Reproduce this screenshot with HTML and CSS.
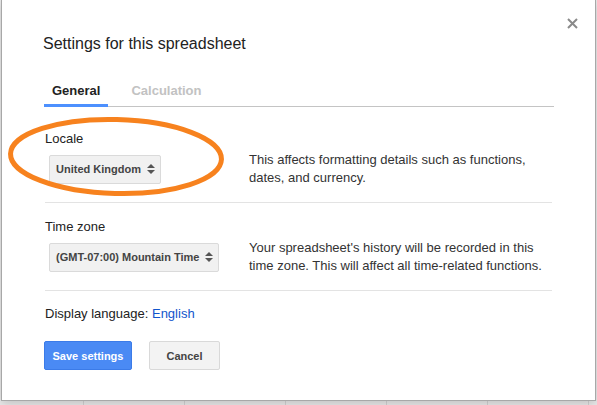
FILE: index.html
```html
<!DOCTYPE html>
<html lang="en">
<head>
<meta charset="utf-8">
<title>Settings for this spreadsheet</title>
<link rel="stylesheet" href="styles.css">
</head>
<body>
<div class="dialog">
  <button class="close" aria-label="Close">
    <svg width="11" height="11" viewBox="0 0 11 11"><path d="M1 1L10 10M10 1L1 10" stroke="#8a8a8a" stroke-width="2" fill="none"/></svg>
  </button>
  <h1 class="title">Settings for this spreadsheet</h1>
  <div class="tabs">
    <div class="tab tab-active">General</div>
    <div class="tab tab-disabled">Calculation</div>
  </div>
  <div class="section">
    <div class="label">Locale</div>
    <div class="row">
      <div class="field">
        <div class="select"><span>United Kingdom</span><span class="arrows"><i class="up"></i><i class="down"></i></span></div>
      </div>
      <p class="desc">This affects formatting details such as functions,<br>dates, and currency.</p>
    </div>
  </div>
  <div class="section">
    <div class="label">Time zone</div>
    <div class="row">
      <div class="field">
        <div class="select"><span>(GMT-07:00) Mountain Time</span><span class="arrows"><i class="up"></i><i class="down"></i></span></div>
      </div>
      <p class="desc">Your spreadsheet's history will be recorded in this<br>time zone. This will affect all time-related functions.</p>
    </div>
  </div>
  <div class="lang">Display language: <a class="link" href="#">English</a></div>
  <div class="buttons">
    <button class="btn btn-primary">Save settings</button>
    <button class="btn btn-default">Cancel</button>
  </div>
  <svg class="highlight" width="240" height="210" viewBox="0 0 240 210">
    <ellipse cx="114" cy="156.5" rx="105.5" ry="37" transform="rotate(1.5 114 156.5)" fill="none" stroke="#f7821e" stroke-width="5"/>
  </svg>
</div>
</body>
</html>
```
FILE: styles.css
```css
html, body {
  margin: 0;
  padding: 0;
}
body {
  width: 597px;
  height: 405px;
  overflow: hidden;
  background-color: #ebebeb;
  background-image: repeating-linear-gradient(90deg, transparent 0 83px, #d3d3d3 83px 84px, transparent 84px 101px);
  font-family: "Liberation Sans", Arial, sans-serif;
}
.dialog {
  position: relative;
  box-sizing: border-box;
  width: 595px;
  height: 402px;
  margin: -1px 0 0 1px;
  padding: 0 41px 0 42px;
  background: #fff;
  border: 1px solid #a8a8a8;
  box-shadow: 0 3px 10px rgba(0, 0, 0, 0.18);
}
.close {
  position: absolute;
  left: 565px;
  top: 18px;
  width: 11px;
  height: 11px;
  padding: 0;
  border: 0;
  background: none;
  display: block;
}
.close svg { display: block; }
.title {
  margin: 0 0 0 -1px;
  padding-top: 34px;
  font-size: 16px;
  line-height: 20px;
  font-weight: normal;
  color: #222;
}
.tabs {
  display: flex;
  gap: 15px;
  margin-top: 29px;
  border-bottom: 1px solid #c4c4c4;
}
.tab {
  padding: 0 8px 5px;
  font-size: 13px;
  line-height: 16px;
  font-weight: bold;
  border-bottom: 3px solid transparent;
  margin-bottom: -1px;
}
.tab-active {
  color: #222;
  border-bottom-color: #4d90fe;
}
.tab-disabled {
  color: #c2c2c2;
}
.section {
  margin: 0 2px 0 1px;
  padding: 16px 0 15px;
  border-bottom: 1px solid #e3e3e3;
}
.tabs + .section {
  padding-top: 24px;
}
.label {
  font-size: 13px;
  line-height: 16px;
  color: #222;
  margin-bottom: 4px;
}
.row {
  display: flex;
  align-items: center;
}
.field {
  width: 204px;
  flex: none;
}
.select {
  display: inline-flex;
  align-items: center;
  box-sizing: border-box;
  height: 29px;
  margin-left: 4px;
  padding: 0 5px 0 6px;
  gap: 6px;
  background: #f1f1f1;
  border: 1px solid #dadada;
  border-radius: 2px;
  font-size: 11px;
  font-weight: bold;
  color: #444;
}
.arrows {
  display: flex;
  flex-direction: column;
  gap: 2px;
  width: 8px;
}
.arrows i {
  display: block;
  width: 0;
  height: 0;
  border-left: 4px solid transparent;
  border-right: 4px solid transparent;
}
.arrows .up { border-bottom: 4px solid #555; }
.arrows .down { border-top: 4px solid #555; }
.desc {
  margin: 0;
  font-size: 13px;
  line-height: 18px;
  color: #333;
}
.lang {
  margin: 15px 0 0 1px;
  font-size: 13px;
  line-height: 16px;
  color: #222;
}
.link {
  color: #1155cc;
  text-decoration: none;
}
.buttons {
  display: flex;
  gap: 17px;
  margin-top: 19px;
}
.btn {
  box-sizing: border-box;
  height: 29px;
  padding: 0;
  border-radius: 2px;
  font-family: "Liberation Sans", Arial, sans-serif;
  font-size: 11px;
  font-weight: bold;
  text-align: center;
  cursor: default;
}
.btn-primary {
  width: 88px;
  background: #4a8af4;
  border: 1px solid #3b7be8;
  color: #fff;
}
.btn-default {
  width: 71px;
  background: #f3f3f3;
  border: 1px solid #d9d9d9;
  color: #444;
}
.highlight {
  position: absolute;
  left: 0;
  top: 0;
  pointer-events: none;
}
```
